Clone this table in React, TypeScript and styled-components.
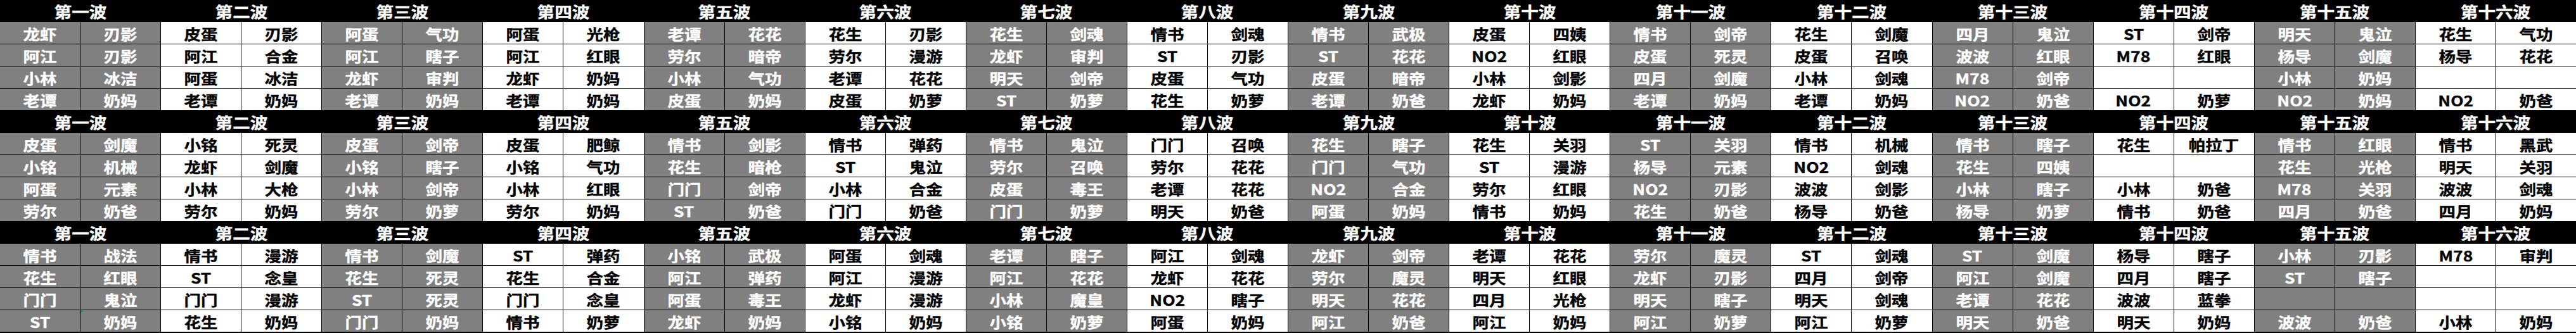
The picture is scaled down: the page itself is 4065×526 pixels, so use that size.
import React from "react";
import styled, { createGlobalStyle } from "styled-components";

const GlobalStyle = createGlobalStyle`
  html, body {
    margin: 0;
    padding: 0;
    background: #000;
  }
  #root {
    width: 4065px;
  }
`;

const WAVES = [
  "第一波", "第二波", "第三波", "第四波", "第五波", "第六波", "第七波", "第八波",
  "第九波", "第十波", "第十一波", "第十二波", "第十三波", "第十四波", "第十五波", "第十六波",
];

// Each wave: 4 rows of "name role"; "-" means an empty row
const SECTIONS: string[][] = [
  [
    "龙虾 刃影|阿江 刃影|小林 冰洁|老谭 奶妈",
    "皮蛋 刃影|阿江 合金|阿蛋 冰洁|老谭 奶妈",
    "阿蛋 气功|阿江 瞎子|龙虾 审判|老谭 奶妈",
    "阿蛋 光枪|阿江 红眼|龙虾 奶妈|老谭 奶妈",
    "老谭 花花|劳尔 暗帝|小林 气功|皮蛋 奶妈",
    "花生 刃影|劳尔 漫游|老谭 花花|皮蛋 奶萝",
    "花生 剑魂|龙虾 审判|明天 剑帝|ST 奶萝",
    "情书 剑魂|ST 刃影|皮蛋 气功|花生 奶萝",
    "情书 武极|ST 花花|皮蛋 暗帝|老谭 奶爸",
    "皮蛋 四姨|NO2 红眼|小林 剑影|龙虾 奶妈",
    "情书 剑帝|皮蛋 死灵|四月 剑魔|老谭 奶妈",
    "花生 剑魔|皮蛋 召唤|小林 剑魂|老谭 奶妈",
    "四月 鬼泣|波波 红眼|M78 剑帝|NO2 奶爸",
    "ST 剑帝|M78 红眼|-|NO2 奶萝",
    "明天 鬼泣|杨导 剑魔|小林 奶妈|NO2 奶妈",
    "花生 气功|杨导 花花|-|NO2 奶爸",
  ],
  [
    "皮蛋 剑魔|小铭 机械|阿蛋 元素|劳尔 奶爸",
    "小铭 死灵|龙虾 剑魔|小林 大枪|劳尔 奶妈",
    "皮蛋 剑帝|小铭 瞎子|小林 剑帝|劳尔 奶萝",
    "皮蛋 肥鲸|小铭 气功|小林 红眼|劳尔 奶妈",
    "情书 剑影|花生 暗枪|门门 剑帝|ST 奶爸",
    "情书 弹药|ST 鬼泣|小林 合金|门门 奶爸",
    "情书 鬼泣|劳尔 召唤|皮蛋 毒王|门门 奶萝",
    "门门 召唤|劳尔 花花|老谭 花花|明天 奶爸",
    "花生 瞎子|门门 气功|NO2 合金|阿蛋 奶妈",
    "花生 关羽|ST 漫游|劳尔 红眼|情书 奶妈",
    "ST 关羽|杨导 元素|NO2 刃影|花生 奶爸",
    "情书 机械|NO2 剑魂|波波 剑影|杨导 奶爸",
    "情书 瞎子|花生 四姨|小林 瞎子|杨导 奶萝",
    "花生 帕拉丁|-|小林 奶爸|情书 奶爸",
    "情书 红眼|花生 光枪|M78 关羽|四月 奶爸",
    "情书 黑武|明天 关羽|波波 剑魂|四月 奶妈",
  ],
  [
    "情书 战法|花生 红眼|门门 鬼泣|ST 奶妈",
    "情书 漫游|ST 念皇|门门 漫游|花生 奶妈",
    "情书 剑魔|花生 死灵|ST 死灵|门门 奶妈",
    "ST 弹药|花生 合金|门门 念皇|情书 奶萝",
    "小铭 武极|阿江 弹药|阿蛋 毒王|龙虾 奶妈",
    "阿蛋 剑魂|阿江 漫游|龙虾 漫游|小铭 奶妈",
    "老谭 瞎子|阿江 花花|小林 魔皇|小铭 奶萝",
    "阿江 剑魂|龙虾 花花|NO2 瞎子|阿蛋 奶妈",
    "龙虾 剑帝|劳尔 魔灵|明天 花花|阿江 奶爸",
    "老谭 花花|明天 红眼|四月 光枪|阿江 奶妈",
    "劳尔 魔灵|龙虾 刃影|明天 瞎子|阿江 奶萝",
    "ST 剑魂|四月 剑帝|明天 剑魂|阿江 奶萝",
    "ST 剑魔|阿江 剑魔|老谭 花花|明天 奶爸",
    "杨导 瞎子|四月 瞎子|波波 蓝拳|明天 奶妈",
    "小林 刃影|ST 瞎子|-|波波 奶爸",
    "M78 审判|-|-|小林 奶妈",
  ],
];

type Tone = "gray" | "white";

const Page = styled.div`
  display: flex;
  flex-direction: column;
  gap: 1px;
  width: 4065px;
  background: #000;
  padding-bottom: 1px;
`;

const Section = styled.div`
  display: grid;
  grid-template-columns: repeat(32, 1fr);
  grid-auto-rows: 34px;
  gap: 1px;
  background: #000;
`;

const Header = styled.div`
  grid-column: span 2;
  display: flex;
  align-items: center;
  justify-content: center;
  padding-top: 2px;
  background: #000;
  color: #fff;
  font-family: "Noto Sans CJK SC", "Noto Sans", sans-serif;
  font-weight: 700;
  font-size: 24px;
  line-height: 1;
  -webkit-text-stroke: 0.4px #fff;
`;

const Cell = styled.div<{ $tone: Tone; $flag?: boolean }>`
  position: relative;
  display: flex;
  align-items: center;
  justify-content: center;
  padding-top: 3px;
  background: ${(p) => (p.$tone === "gray" ? "#808080" : "#ffffff")};
  color: ${(p) => (p.$tone === "gray" ? "#ffffff" : "#000000")};
  -webkit-text-stroke: 0.4px ${(p) => (p.$tone === "gray" ? "#ffffff" : "#000000")};
  font-family: "Noto Sans CJK SC", "Noto Sans", sans-serif;
  font-weight: 700;
  font-size: 23px;
  line-height: 1;
  ${(p) =>
    p.$flag
      ? `&::before {
          content: "";
          position: absolute;
          left: 0;
          top: 0;
          width: 0;
          height: 0;
          border-top: 5px solid #1f8a3c;
          border-right: 5px solid transparent;
        }`
      : ""}
`;

const Stretch = styled.span`
  display: inline-block;
  transform: scaleX(1.15);
  white-space: nowrap;
`;

function parseRows(wave: string): [string, string][] {
  return wave.split("|").map((r) => {
    if (r === "-") return ["", ""];
    const [a, b] = r.split(" ");
    return [a ?? "", b ?? ""];
  });
}

function SheetSection({ data, index }: { data: string[]; index: number }) {
  const parsed = data.map(parseRows);
  return (
    <Section>
      {WAVES.map((w) => (
        <Header key={w}>
          <Stretch>{w}</Stretch>
        </Header>
      ))}
      {[0, 1, 2, 3].map((r) =>
        parsed.map((wave, wi) => {
          const tone: Tone = wi % 2 === 0 ? "gray" : "white";
          const [a, b] = wave[r];
          return (
            <React.Fragment key={`${r}-${wi}`}>
              <Cell $tone={tone}>
                <Stretch>{a}</Stretch>
              </Cell>
              <Cell $tone={tone} $flag={index === 2 && r === 3 && wi === 0}>
                <Stretch>{b}</Stretch>
              </Cell>
            </React.Fragment>
          );
        })
      )}
    </Section>
  );
}

export default function App() {
  return (
    <>
      <GlobalStyle />
      <Page>
        {SECTIONS.map((s, i) => (
          <SheetSection key={i} data={s} index={i} />
        ))}
      </Page>
    </>
  );
}
